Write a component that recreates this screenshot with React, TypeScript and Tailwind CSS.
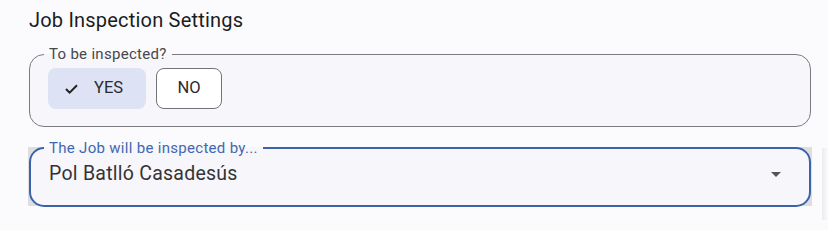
import React from "react";

export default function App() {
  return (
    <div
      className="relative w-[828px] h-[230px] bg-[#fbfbfd] pl-[29px] pr-[17px] pt-[8px]"
      style={{ fontFamily: "Roboto, 'Noto Sans', sans-serif" }}
    >
      <h2 className="text-[20px] leading-[24px] font-normal tracking-[0.2px] text-[#1c1c1f]">
        Job Inspection Settings
      </h2>
      <fieldset className="mt-[14px] border border-[#7b7a7e] rounded-[15px] bg-[#f7f6fa] px-0">
        <legend className="ml-[14px] px-[5px] text-[15px] leading-[16px] tracking-[0.3px] text-[#48474c]">
          To be inspected?
        </legend>
        <div className="flex gap-[10px] pt-[6px] pb-[17px] pl-[18px]">
          <div className="flex items-center h-[41px] w-[98px] rounded-[8px] bg-[#dde3f4] pl-[17px] text-[#2b2b30]">
            <svg width="13" height="10" viewBox="0 0 13 10" className="mr-[16px]">
              <path d="M1 5 L4.6 8.6 L12 1.2" fill="none" stroke="#222" strokeWidth="2" />
            </svg>
            <span className="text-[16.5px]">YES</span>
          </div>
          <div className="flex items-center justify-center h-[41px] w-[66px] rounded-[8px] border border-[#747378] bg-white text-[#2b2b30] text-[16.5px]">
            NO
          </div>
        </div>
      </fieldset>
      <div className="flex flex-col mt-[20px] bg-[#dedede] h-[59px] w-[784px] -ml-[1px] px-[1px]">
        <fieldset className="-mt-[7px] border-2 border-[#3a62ad] rounded-[15px] bg-[#f7f6fa] px-0">
          <legend className="ml-[13px] px-[5px] text-[15px] leading-[16px] tracking-[0.3px] text-[#4068b2]">
            The Job will be inspected by...
          </legend>
          <div className="flex items-center justify-between pl-[18px] pr-[28px] pt-[6px] pb-[19px]">
            <span className="text-[19.5px] leading-[24px] tracking-[0.25px] text-[#333336]">Pol Batlló Casadesús</span>
            <svg width="10" height="5" viewBox="0 0 10 5">
              <path d="M0 0 L10 0 L5 5 Z" fill="#555" />
            </svg>
          </div>
        </fieldset>
      </div>
      <div className="absolute left-[822px] top-[148px] w-[6px] h-[72px] bg-gradient-to-r from-[#ececef] to-[#fbfbfd]" />
    </div>
  );
}
